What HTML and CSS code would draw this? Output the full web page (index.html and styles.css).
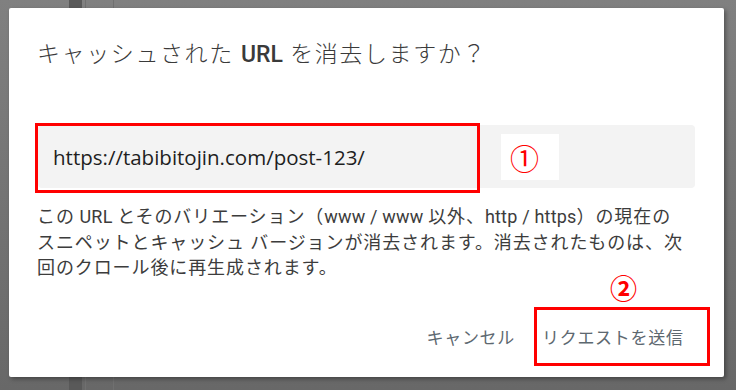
FILE: index.html
```html
<!DOCTYPE html>
<html lang="ja">
<head>
  <meta charset="UTF-8">
  <title>キャッシュされた URL を消去</title>
  <link rel="stylesheet" href="styles.css">
</head>
<body>

  <div class="dialog">
    <h1 class="title">キャッシュされた <b>URL</b> を消去しますか？</h1>

    <div class="field">
      <div class="url mark">https://tabibitojin.com/post-123/</div>
      <div class="tag">①</div>
    </div>

    <p class="desc">この<span class="lat"> URL </span>とそのバリエーション（<span class="lat">www / www </span>以外、<span class="lat">http / https</span>）の現在の<br>スニペットとキャッシュ バージョンが消去されます。消去されたものは、次<br>回のクロール後に再生成されます。</p>

    <div class="actions">
      <button class="btn">キャンセル</button>
      <button class="btn send mark">リクエストを送信<span class="num">②</span></button>
    </div>
  </div>

</body>
</html>
```

FILE: styles.css
```css
body {
  margin: 0;
  height: 390px;
  overflow: hidden;
  font-family: Roboto, "Noto Sans CJK JP", sans-serif;
  background:
    linear-gradient(to right, transparent 69px, #595959 69px, #595959 82px, transparent 82px,
      transparent 85px, #707070 85px, #707070 86px, transparent 86px,
      transparent 113px, #707070 113px, #707070 114px, transparent 114px),
    linear-gradient(#808080, #686868);
}

.dialog {
  margin: 8px 0 0 9px;
  width: 715px;
  height: 369px;
  box-sizing: border-box;
  padding: 31px 29px 0 28px;
  background: #fff;
  border-radius: 2px;
  box-shadow: 2px 2px 4px rgba(0,0,0,0.35);
}

.title {
  margin: 0;
  font-size: 23px;
  line-height: 32px;
  font-weight: 300;
  letter-spacing: 1.6px;
  color: #3a3a3a;
  white-space: nowrap;
}

.title b {
  font-weight: 500;
  letter-spacing: 0;
}

.field {
  margin: 54px 0 0 1px;
  height: 63px;
  display: flex;
  align-items: center;
  background: #f3f3f3;
  border-radius: 4px;
}

.url {
  width: 442px;
  height: 63px;
  box-sizing: border-box;
  padding-left: 15px;
  display: flex;
  align-items: center;
  font-family: "Open Sans", "Noto Sans", sans-serif;
  font-size: 20.5px;
  color: #1e1e1e;
}

.mark {
  position: relative;
}

.mark::after {
  content: "";
  position: absolute;
  left: -3px;
  top: -2px;
  right: 0;
  bottom: -5px;
  border: 3px solid #ff0000;
}

.tag {
  margin-left: 21px;
  width: 58px;
  height: 46px;
  box-sizing: border-box;
  padding-left: 9px;
  background: #fff;
  color: #ff0000;
  font-family: "Noto Sans CJK JP", sans-serif;
  font-size: 29px;
  line-height: 46px;
}

.desc {
  margin: 16px 0 0;
  font-size: 18px;
  line-height: 25.5px;
  letter-spacing: 0.9px;
  color: #3c3c3c;
  white-space: nowrap;
}

.desc .lat {
  letter-spacing: 0.2px;
}

.actions {
  margin: 26px -15px 0 0;
  display: flex;
  justify-content: flex-end;
  align-items: center;
}

.btn {
  padding: 0;
  border: 0;
  background: none;
  font-family: Roboto, "Noto Sans CJK JP", sans-serif;
  font-size: 17px;
  letter-spacing: 0.7px;
  color: #5d6870;
  cursor: pointer;
}

.send {
  margin-left: 19px;
  width: 176px;
  height: 59px;
  box-sizing: border-box;
  padding-left: 8px;
  text-align: left;
}

.send::after {
  left: 0;
  top: 0;
  bottom: 0;
}

.num {
  position: absolute;
  left: 76px;
  top: -39px;
  color: #ff0000;
  font-family: "Noto Sans CJK JP", sans-serif;
  font-size: 27px;
  font-weight: bold;
  letter-spacing: 0;
}
```
